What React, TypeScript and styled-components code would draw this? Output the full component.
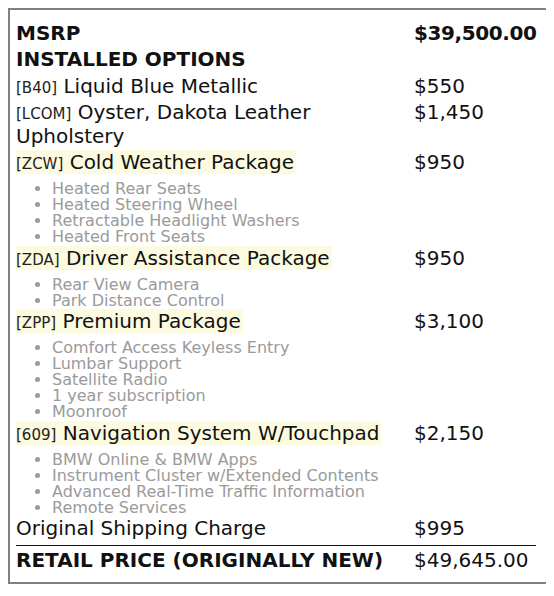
import styled, { createGlobalStyle } from 'styled-components';

type Option = {
  code: string;
  name: string;
  price: string;
  features?: string[];
};

const options: Option[] = [
  { code: 'B40', name: 'Liquid Blue Metallic', price: '$550' },
  { code: 'LCOM', name: 'Oyster, Dakota Leather Upholstery', price: '$1,450' },
  {
    code: 'ZCW',
    name: 'Cold Weather Package',
    price: '$950',
    features: ['Heated Rear Seats', 'Heated Steering Wheel', 'Retractable Headlight Washers', 'Heated Front Seats'],
  },
  {
    code: 'ZDA',
    name: 'Driver Assistance Package',
    price: '$950',
    features: ['Rear View Camera', 'Park Distance Control'],
  },
  {
    code: 'ZPP',
    name: 'Premium Package',
    price: '$3,100',
    features: ['Comfort Access Keyless Entry', 'Lumbar Support', 'Satellite Radio', '1 year subscription', 'Moonroof'],
  },
  {
    code: '609',
    name: 'Navigation System W/Touchpad',
    price: '$2,150',
    features: [
      'BMW Online & BMW Apps',
      'Instrument Cluster w/Extended Contents',
      'Advanced Real-Time Traffic Information',
      'Remote Services',
    ],
  },
];

const GlobalStyle = createGlobalStyle`
  body {
    margin: 8px;
    background: #fff;
    font-family: 'DejaVu Sans', 'Liberation Sans', sans-serif;
    color: #111;
  }
`;

const Sticker = styled.div`
  width: 540px;
  height: 576px;
  box-sizing: border-box;
  border: 2px solid #808080;
  padding: 10px 10px 0 6px;
`;

const Row = styled.div<{ $total?: boolean; $list?: boolean }>`
  display: grid;
  grid-template-columns: 1fr 122px;
  font-size: 20px;
  line-height: 23.5px;
  padding: ${(p) => (p.$total ? '2.5px 0 1.5px' : p.$list ? '1.5px 0 0' : '1.5px 0')};
  margin-top: ${(p) => (p.$total ? '3px' : '0')};
  border-top: ${(p) => (p.$total ? '1px solid #111' : 'none')};
`;

const Label = styled.div<{ $bold?: boolean }>`
  font-weight: ${(p) => (p.$bold ? 700 : 400)};
  padding-right: 8px;
`;

const Price = styled.div<{ $bold?: boolean }>`
  font-weight: ${(p) => (p.$bold ? 700 : 400)};
  letter-spacing: ${(p) => (p.$bold ? '-0.4px' : '0')};
`;

const Title = styled.span<{ $mark?: boolean }>`
  background: ${(p) => (p.$mark ? '#fcfadf' : 'transparent')};
  padding-right: ${(p) => (p.$mark ? '2px' : '0')};
`;

const Code = styled.span`
  font-size: 15px;
  line-height: 1;
  color: #222;
`;

const Features = styled.ul`
  margin: 6.5px 0 0;
  padding-left: 36px;
  font-size: 16px;
  line-height: 16px;
  color: #9a9a9a;
  list-style: disc;
`;

const Feature = styled.li``;

export default function App() {
  return (
    <>
      <GlobalStyle />
      <Sticker>
        <Row>
          <Label $bold>MSRP</Label>
          <Price $bold>$39,500.00</Price>
        </Row>
        <Row>
          <Label $bold>INSTALLED OPTIONS</Label>
          <Price />
        </Row>
        {options.map((o) => (
          <Row key={o.code} $list={!!o.features}>
            <Label>
              <Title $mark={!!o.features}>
                <Code>[{o.code}]</Code> {o.name}
              </Title>
              {o.features && (
                <Features>
                  {o.features.map((f) => (
                    <Feature key={f}>{f}</Feature>
                  ))}
                </Features>
              )}
            </Label>
            <Price>{o.price}</Price>
          </Row>
        ))}
        <Row>
          <Label>Original Shipping Charge</Label>
          <Price>$995</Price>
        </Row>
        <Row $total>
          <Label $bold>RETAIL PRICE (ORIGINALLY NEW)</Label>
          <Price>$49,645.00</Price>
        </Row>
      </Sticker>
    </>
  );
}
